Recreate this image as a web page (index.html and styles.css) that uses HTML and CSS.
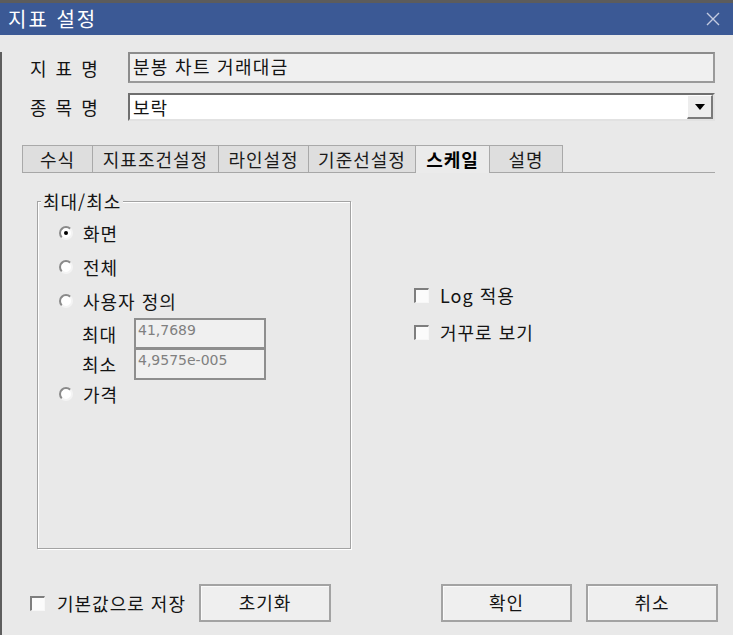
FILE: index.html
```html
<!DOCTYPE html>
<html lang="ko">
<head>
<meta charset="utf-8">
<title>지표 설정</title>
<link rel="stylesheet" href="styles.css">
</head>
<body>
<div class="strip"></div>
<div class="titlebar">
  <span class="title">지표 설정</span>
  <svg class="close" width="14" height="14" viewBox="0 0 14 14"><path d="M1 1 L13 13 M13 1 L1 13" stroke="#c3cbe0" stroke-width="1.4" fill="none"/></svg>
</div>
<div class="window">
  <div class="row row1">
    <span class="label">지 표 명</span>
    <div class="field readonly">분봉 차트 거래대금</div>
  </div>
  <div class="row row2">
    <span class="label">종 목 명</span>
    <div class="field combo">
      <span class="combo-text">보락</span>
      <span class="arrow"><svg width="10" height="6" viewBox="0 0 10 6"><path d="M0 0 H10 L5 6 Z" fill="#000"/></svg></span>
    </div>
  </div>
  <div class="tabs">
    <div class="tab t1">수식</div>
    <div class="tab t2">지표조건설정</div>
    <div class="tab t3">라인설정</div>
    <div class="tab t4">기준선설정</div>
    <div class="tab t5 active">스케일</div>
    <div class="tab t6">설명</div>
  </div>
  <div class="panel">
    <div class="group">
      <span class="group-title">최대/최소</span>
      <div class="opt"><span class="radio checked"></span><span>화면</span></div>
      <div class="opt"><span class="radio"></span><span>전체</span></div>
      <div class="opt"><span class="radio"></span><span>사용자 정의</span></div>
      <div class="sub sub1"><span class="sub-label">최대</span><div class="num n1">41,7689</div></div>
      <div class="sub sub2"><span class="sub-label">최소</span><div class="num n2">4,9575e-005</div></div>
      <div class="opt last"><span class="radio"></span><span>가격</span></div>
    </div>
    <div class="options">
      <div class="check-row"><span class="checkbox"></span><span>Log 적용</span></div>
      <div class="check-row"><span class="checkbox"></span><span>거꾸로 보기</span></div>
    </div>
  </div>
  <div class="footer">
    <span class="checkbox"></span>
    <span class="save-label">기본값으로 저장</span>
    <button class="btn reset">초기화</button>
    <button class="btn ok">확인</button>
    <button class="btn cancel">취소</button>
  </div>
</div>
</body>
</html>
```
FILE: styles.css
```css
html, body {
  margin: 0;
  padding: 0;
}
body {
  width: 733px;
  height: 635px;
  overflow: hidden;
  background: #e9e9e9;
  font-family: "Noto Sans CJK KR", "Noto Sans", sans-serif;
  font-size: 18px;
  letter-spacing: 1px;
  color: #141414;
}
.strip {
  height: 3px;
  background: #5c5c5c;
}
.titlebar {
  height: 32px;
  background: #3b5995;
  color: #ffffff;
  display: flex;
  align-items: center;
  justify-content: space-between;
  padding: 0 13px 0 8px;
}
.title {
  font-size: 20px;
  line-height: 22px;
  letter-spacing: 2px;
}
.window {
  border-left: 2px solid #5e5e5e;
  height: 600px;
  box-sizing: border-box;
}
.row {
  display: flex;
  align-items: center;
  padding-left: 28px;
}
.row1 { margin-top: 17px; }
.row2 { margin-top: 10px; }
.label {
  width: 98px;
  line-height: 20px;
  letter-spacing: 2px;
}
.field {
  width: 587px;
  box-sizing: border-box;
  display: flex;
  align-items: center;
  line-height: 20px;
}
.readonly {
  height: 31px;
  background: #f0f0f0;
  border: 2px solid #8c8c8c;
  border-right-color: #9a9a9a;
  border-bottom-color: #9a9a9a;
  padding-left: 3px;
  padding-bottom: 3px;
  letter-spacing: 1.3px;
}
.combo {
  height: 28px;
  background: #ffffff;
  border-top: 2px solid #6f6f6f;
  border-left: 2px solid #6f6f6f;
  border-right: 2px solid #e2e2e2;
  border-bottom: 2px solid #e2e2e2;
  padding-left: 3px;
  justify-content: space-between;
}
.combo-text { padding-bottom: 1px; }
.arrow {
  width: 26px;
  height: 24px;
  box-sizing: border-box;
  background: #ededed;
  border-top: 1px solid #ffffff;
  border-left: 1px solid #ffffff;
  border-right: 2px solid #7a7a7a;
  border-bottom: 2px solid #7a7a7a;
  display: flex;
  align-items: center;
  justify-content: center;
}
.tabs {
  display: flex;
  align-items: flex-end;
  margin-top: 24px;
  margin-left: 20px;
  width: 693px;
  height: 28px;
  box-sizing: border-box;
  border-bottom: 1px solid #a7a7a7;
}
.tab {
  height: 27px;
  box-sizing: border-box;
  background: #dedede;
  border-top: 1px solid #a9a9a9;
  border-right: 1px solid #a9a9a9;
  display: flex;
  align-items: center;
  justify-content: center;
  font-size: 18px;
  line-height: 20px;
  padding-bottom: 1px;
  color: #1a1a1a;
}
.t1 { width: 71px; border-left: 1px solid #a9a9a9; }
.t2 { width: 126px; }
.t3 { width: 90px; }
.t4 { width: 107px; }
.t5 { width: 74px; }
.t6 { width: 73px; }
.tab.active {
  background: #ebebeb;
  font-weight: bold;
  height: 28px;
  margin-bottom: -1px;
  color: #000;
}
.panel {
  display: flex;
  align-items: flex-start;
}
.group {
  position: relative;
  margin-top: 28px;
  margin-left: 35px;
  width: 314px;
  height: 348px;
  box-sizing: border-box;
  border: 1px solid #a3a3a3;
  box-shadow: inset 1px 1px 0 #ffffff, 1px 1px 0 #ffffff;
  padding-top: 14px;
  padding-left: 21px;
}
.group-title {
  position: absolute;
  top: -11px;
  left: 3px;
  padding: 0 2px;
  background: #e9e9e9;
  line-height: 20px;
  font-size: 18px;
}
.opt {
  display: flex;
  align-items: center;
  height: 34px;
  line-height: 20px;
}
.opt.last { height: 28px; }
.radio {
  width: 14px;
  height: 14px;
  box-sizing: border-box;
  border-radius: 50%;
  border: 2px solid;
  border-color: #8a8a8a #f4f4f4 #f4f4f4 #8a8a8a;
  background: #ffffff;
  margin-right: 10px;
  display: flex;
  align-items: center;
  justify-content: center;
}
.radio.checked::after {
  content: "";
  width: 4px;
  height: 4px;
  border-radius: 50%;
  background: #000;
}
.sub {
  display: flex;
  align-items: center;
  padding-left: 23px;
}
.sub-label {
  width: 52px;
  line-height: 20px;
}
.num {
  width: 132px;
  box-sizing: border-box;
  background: #f0f0f0;
  border: 2px solid #8e8e8e;
  color: #808080;
  font-family: "DejaVu Sans", "Liberation Sans", sans-serif;
  font-size: 14px;
  letter-spacing: 0;
  line-height: 16px;
  padding: 2px 0 0 2px;
  align-self: stretch;
}
.sub1 { height: 31px; }
.sub2 { height: 32px; margin-top: -1px; }
.options {
  margin-left: 63px;
  margin-top: 107px;
  display: flex;
  flex-direction: column;
  gap: 7px;
}
.check-row {
  display: flex;
  align-items: center;
  height: 30px;
  line-height: 20px;
}
.checkbox {
  width: 15px;
  height: 15px;
  box-sizing: border-box;
  background: #fbfbfb;
  border-top: 2px solid #7e7e7e;
  border-left: 2px solid #7e7e7e;
  border-right: 1px solid #f7f7f7;
  border-bottom: 1px solid #f7f7f7;
  margin-right: 11px;
  flex: none;
}
.footer {
  display: flex;
  align-items: center;
  margin-top: 35px;
  padding-left: 28px;
  height: 38px;
}
.save-label {
  width: 132px;
  line-height: 20px;
  margin-left: 1px;
  white-space: nowrap;
}
.btn {
  height: 38px;
  box-sizing: border-box;
  background: #efefef;
  border: 2px solid #a3a3a3;
  box-shadow: inset 1px 1px 0 #fafafa;
  font-family: "Noto Sans CJK KR", "Noto Sans", sans-serif;
  font-size: 18px;
  letter-spacing: 1px;
  color: #141414;
  padding: 0 0 2px 0;
}
.reset { width: 132px; margin-left: 10px; }
.ok { width: 131px; margin-left: 110px; }
.cancel { width: 132px; margin-left: 14px; }
```
